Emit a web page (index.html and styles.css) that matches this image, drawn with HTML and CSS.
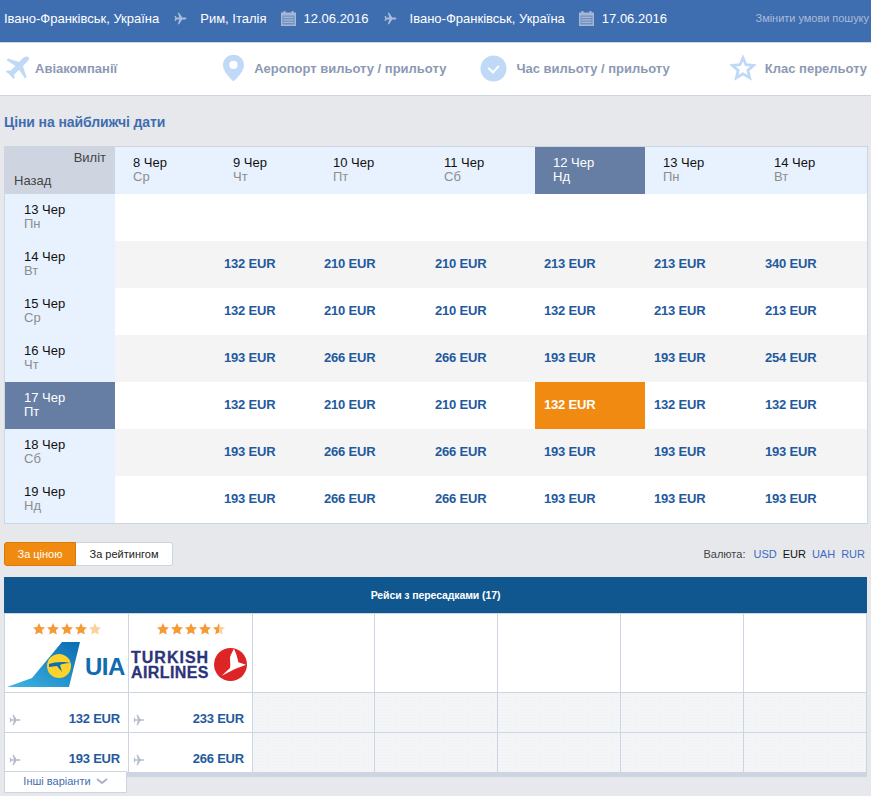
FILE: index.html
```html
<!DOCTYPE html>
<html>
<head>
  <title>Ціни на найближчі дати</title>
  <meta name="viewport" content="width=device-width, initial-scale=1">
  <link rel="stylesheet" href="styles.css">
</head>
<body>
  <svg class="defs" width="0" height="0">
    <defs>
      <symbol id="plane" viewBox="0 0 24 24">
        <path d="M23 12c0-1-1.200-1.700-2.600-1.700h-5.200L9.400 1.500H7l2.900 8.800H5L3 7.600H1l1.200 4.400L1 16.400h2l2-2.700h4.900L7 22.500h2.400l5.800-8.800h5.200C21.800 13.700 23 13 23 12z"/>
      </symbol>
      <symbol id="calendar" viewBox="0 0 15 15">
        <path d="M2.500 0h2v1.500h6V0h2v1.500H15V15H0V1.500h2.500z" fill="#a4b8d6"/>
        <path d="M1.500 4.500h12v9h-12z" fill="#6f90bf"/>
        <path d="M2.500 5.800h10V7h-10zM2.500 8.300h10v1.200h-10zM2.500 10.800h10V12h-10z" fill="#a4b8d6"/>
      </symbol>
      <symbol id="star" viewBox="0 0 14 14">
        <path d="M7 1l1.800 3.900 4.200.5-3.100 2.900.9 4.200L7 10.400l-3.800 2.100.9-4.200L1 5.400l4.200-.5z"/>
      </symbol>
      <linearGradient id="half-star">
        <stop offset="0.5" stop-color="#f59a36"/>
        <stop offset="0.5" stop-color="#fbd1a0"/>
      </linearGradient>
      <linearGradient id="tail" x1="0" y1="1" x2="1" y2="0">
        <stop offset="0" stop-color="#3fb6e6"/>
        <stop offset="1" stop-color="#0a6cb0"/>
      </linearGradient>
    </defs>
  </svg>

  <div class="search-bar">
    <span>Івано-Франківськ, Україна</span>
    <svg class="bar-plane"><use href="#plane"/></svg>
    <span>Рим, Італія</span>
    <svg class="bar-cal"><use href="#calendar"/></svg>
    <span>12.06.2016</span>
    <svg class="bar-plane"><use href="#plane"/></svg>
    <span>Івано-Франківськ, Україна</span>
    <svg class="bar-cal"><use href="#calendar"/></svg>
    <span>17.06.2016</span>
    <a class="change-search">Змінити умови пошуку</a>
  </div>

  <div class="filters">
    <div class="filter">
      <svg class="filter-icon plane-icon" viewBox="0 0 24 24"><path d="M23.500 1C22 -.2 19.500.6 18 2.100l-4 4L3 2.500 1.500 4l8.800 5.900-4.800 4.900-3-.6L1 15.700l4 3.300 3.300 4 1.500-1.500-.6-3 4.900-4.800L20 22.500l1.500-1.500-3.600-11 4-4c1.500-1.500 2.800-3.800 1.600-5z"/></svg>
      <span>Авіакомпанії</span>
    </div>
    <div class="filter filter-airport">
      <svg class="filter-icon pin-icon" viewBox="0 0 22 28"><path fill-rule="evenodd" d="M11 0c6 0 11 4.800 11 10.800C22 17.500 15 24 11 28 7 24 0 17.500 0 10.800 0 4.800 5 0 11 0zm0 6.500a4.300 4.300 0 1 0 0 8.600 4.300 4.300 0 0 0 0-8.600z"/></svg>
      <span>Аеропорт вильоту / прильоту</span>
    </div>
    <div class="filter filter-time">
      <svg class="filter-icon check-icon" viewBox="0 0 28 28"><circle cx="14" cy="14" r="13.500"/><path d="M8.500 13.500l5 4.500 6-6.500" fill="none" stroke="#fff" stroke-width="2.200"/></svg>
      <span>Час вильоту / прильоту</span>
    </div>
    <div class="filter filter-class">
      <svg class="filter-icon star-icon" viewBox="0 0 28 28"><path d="M14 3l3.200 7.500 8.300.7-6.300 5.300 2 8L14 20.200 6.800 24.500l2-8L2.500 11.200l8.300-.7z" fill="#fff" stroke="#bfd9f6" stroke-width="3"/></svg>
      <span>Клас перельоту</span>
    </div>
  </div>

  <h2 class="section-title">Ціни на найближчі дати</h2>

  <table class="prices">
    <colgroup>
      <col class="col-first"><col class="col-a"><col class="col-a"><col class="col-b"><col class="col-c"><col class="col-d"><col class="col-b"><col class="col-b">
    </colgroup>
    <tr>
      <th class="corner"><div class="corner-out">Виліт</div><div class="corner-back">Назад</div></th>
      <th class="date"><b>8 Чер</b><i>Ср</i></th>
      <th class="date"><b>9 Чер</b><i>Чт</i></th>
      <th class="date"><b>10 Чер</b><i>Пт</i></th>
      <th class="date"><b>11 Чер</b><i>Сб</i></th>
      <th class="date selected"><b>12 Чер</b><i>Нд</i></th>
      <th class="date"><b>13 Чер</b><i>Пн</i></th>
      <th class="date"><b>14 Чер</b><i>Вт</i></th>
    </tr>
    <tr>
      <th class="back"><b>13 Чер</b><i>Пн</i></th>
      <td></td><td></td><td></td><td></td><td></td><td></td><td></td>
    </tr>
    <tr>
      <th class="back"><b>14 Чер</b><i>Вт</i></th>
      <td></td><td>132 EUR</td><td>210 EUR</td><td>210 EUR</td><td>213 EUR</td><td>213 EUR</td><td>340 EUR</td>
    </tr>
    <tr>
      <th class="back"><b>15 Чер</b><i>Ср</i></th>
      <td></td><td>132 EUR</td><td>210 EUR</td><td>210 EUR</td><td>132 EUR</td><td>213 EUR</td><td>213 EUR</td>
    </tr>
    <tr>
      <th class="back"><b>16 Чер</b><i>Чт</i></th>
      <td></td><td>193 EUR</td><td>266 EUR</td><td>266 EUR</td><td>193 EUR</td><td>193 EUR</td><td>254 EUR</td>
    </tr>
    <tr>
      <th class="back selected"><b>17 Чер</b><i>Пт</i></th>
      <td></td><td>132 EUR</td><td>210 EUR</td><td>210 EUR</td><td class="best">132 EUR</td><td>132 EUR</td><td>132 EUR</td>
    </tr>
    <tr>
      <th class="back"><b>18 Чер</b><i>Сб</i></th>
      <td></td><td>193 EUR</td><td>266 EUR</td><td>266 EUR</td><td>193 EUR</td><td>193 EUR</td><td>193 EUR</td>
    </tr>
    <tr>
      <th class="back"><b>19 Чер</b><i>Нд</i></th>
      <td></td><td>193 EUR</td><td>266 EUR</td><td>266 EUR</td><td>193 EUR</td><td>193 EUR</td><td>193 EUR</td>
    </tr>
  </table>

  <div class="sort-row">
    <div class="sort-tabs">
      <button class="sort-tab active">За ціною</button>
      <button class="sort-tab">За рейтингом</button>
    </div>
    <div class="currency">
      <span class="currency-label">Валюта:</span>
      <a>USD</a>
      <a class="current">EUR</a>
      <a>UAH</a>
      <a>RUR</a>
    </div>
  </div>

  <div class="results-head">Рейси з пересадками (17)</div>

  <div class="results">
    <div class="airline">
      <div class="stars">
        <svg><use href="#star"/></svg><svg><use href="#star"/></svg><svg><use href="#star"/></svg><svg><use href="#star"/></svg><svg class="faded"><use href="#star"/></svg>
      </div>
      <div class="logo logo-uia">
        <svg class="uia-tail" viewBox="0 0 74 46">
          <path d="M0 46l25-9L55 1h18l-11 45z" fill="url(#tail)"/>
          <circle cx="52" cy="25" r="12" fill="#fcd22c"/>
          <path d="M42 23c5-2 15-3 21-1-5 0-8 1-10 2l2 7-5-6-8 1z" fill="#0b6fb0"/>
        </svg>
        <span class="uia-name">UIA</span>
      </div>
    </div>
    <div class="airline">
      <div class="stars">
        <svg><use href="#star"/></svg><svg><use href="#star"/></svg><svg><use href="#star"/></svg><svg><use href="#star"/></svg><svg class="half"><use href="#star"/></svg>
      </div>
      <div class="logo logo-turkish">
        <div class="turkish-name">
          <div class="turkish-top">TURKISH</div>
          <div class="turkish-bottom">AIRLINES</div>
        </div>
        <svg class="turkish-mark" viewBox="0 0 33 33">
          <circle cx="16.500" cy="16.500" r="16.500" fill="#dd2526"/>
          <path d="M20 .7c2 4 3.500 9 4.300 13.600l7.700 2.400L21 21 7.700 27.700 16 20c.8-4-.2-7.500 0-10.700 1-3 2.500-6 4-8.600z" fill="#fff"/>
        </svg>
      </div>
    </div>
    <div class="blank"></div><div class="blank"></div><div class="blank"></div><div class="blank"></div><div class="blank"></div>

    <div class="fare"><svg><use href="#plane"/></svg><span>132 EUR</span></div>
    <div class="fare"><svg><use href="#plane"/></svg><span>233 EUR</span></div>
    <div class="blank shaded"></div><div class="blank shaded"></div><div class="blank shaded"></div><div class="blank shaded"></div><div class="blank shaded"></div>

    <div class="fare"><svg><use href="#plane"/></svg><span>193 EUR</span></div>
    <div class="fare"><svg><use href="#plane"/></svg><span>266 EUR</span></div>
    <div class="blank shaded"></div><div class="blank shaded"></div><div class="blank shaded"></div><div class="blank shaded"></div><div class="blank shaded"></div>
  </div>
  <div class="results-foot"></div>
  <a class="more">Інші варіанти <svg viewBox="0 0 12 7"><path d="M1 1l5 4 5-4" fill="none" stroke="#a8b2c4" stroke-width="2"/></svg></a>
</body>
</html>
```

FILE: styles.css
```css
body {
  font-family: "Liberation Sans", Arial, sans-serif;
  background-color: #e7e8ec;
  margin: 0;
  padding: 0;
  height: 796px;
  overflow: hidden;
  font-size: 13px;
}
.defs {
  display: block;
  height: 0;
}
.search-bar {
  display: flex;
  align-items: center;
  height: 36px;
  padding: 0 4px 6px;
  background-color: #3f6eb0;
  color: #fff;
  font-size: 13px;
  border-bottom: 1px solid #ccd5e3;
  white-space: nowrap;
}
.search-bar svg {
  flex: none;
}
.bar-plane {
  width: 13px;
  height: 13px;
  fill: #a9bcd9;
  margin: 0 13px 0 15px;
}
.bar-cal {
  width: 15px;
  height: 15px;
  margin: 0 8px 0 14px;
}
.change-search {
  margin-left: auto;
  margin-right: -2px;
  font-size: 11px;
  letter-spacing: -0.03px;
  color: #a9bcd9;
}
.filters {
  display: flex;
  align-items: center;
  height: 53px;
  padding: 0 0 2px 5px;
  box-sizing: border-box;
  background-color: #fff;
  border-bottom: 1px solid #ccd5e3;
  color: #8c99b3;
  font-size: 13px;
  font-weight: bold;
  white-space: nowrap;
}
.filter {
  display: flex;
  align-items: center;
}
.filter-airport {
  margin-left: 106px;
}
.filter-time {
  margin-left: 34px;
}
.filter-class {
  margin-left: 60px;
}
.filter-icon {
  flex: none;
  fill: #bfd9f6;
}
.plane-icon {
  width: 24px;
  height: 24px;
  margin-right: 6px;
}
.pin-icon {
  width: 21px;
  height: 28px;
  margin-right: 10px;
}
.check-icon {
  width: 27px;
  height: 27px;
  margin-right: 9px;
}
.star-icon {
  width: 26px;
  height: 28px;
  margin-right: 9px;
}
.section-title {
  margin: 18px 0 16px 4px;
  font-size: 14px;
  line-height: 16px;
  letter-spacing: -0.1px;
  color: #3f6eb0;
}
.prices {
  width: 864px;
  margin-left: 4px;
  border-collapse: separate;
  border-spacing: 0;
  table-layout: fixed;
  background-color: #fff;
  border: 1px solid #ccd5e3;
}
.col-first { width: 110px; }
.col-a { width: 100px; }
.col-b { width: 111px; }
.col-c { width: 109px; }
.col-d { width: 110px; }
.prices tr {
  height: 47px;
}
.prices tr:nth-child(odd) td {
  background-color: #f4f4f4;
}
.prices td {
  padding: 0 0 3px 9px;
  font-weight: bold;
  font-size: 13px;
  letter-spacing: -0.2px;
  color: #1f5a9e;
}
.prices td.best {
  background-color: #f08a10;
  color: #fff;
}
.prices th {
  font-weight: normal;
  text-align: left;
  padding: 0;
  vertical-align: middle;
}
.prices b,
.prices i {
  display: block;
  font-weight: normal;
  font-style: normal;
  line-height: 14px;
}
.prices b {
  color: #111;
}
.prices i {
  color: #8d8d8d;
}
.prices .date {
  background-color: #e8f1fe;
  padding: 0 0 2px 18px;
}
.prices .back {
  background-color: #e8f1fe;
  padding: 0 0 2px 19px;
}
.prices th.selected {
  background-color: #667ea3;
}
.prices th.selected b,
.prices th.selected i {
  color: #fff;
}
.prices .corner {
  background-color: #cfd5e0;
  color: #444;
  padding: 0 9px 2px 9px;
}
.corner-out {
  text-align: right;
  line-height: 14px;
  margin-bottom: 9px;
}
.corner-back {
  line-height: 14px;
}
.sort-row {
  display: flex;
  justify-content: space-between;
  align-items: center;
  margin: 17px 6px 0 4px;
  height: 25px;
}
.sort-tabs {
  display: flex;
}
.sort-tab {
  width: 97px;
  height: 24px;
  padding: 0;
  font-family: inherit;
  font-size: 11px;
  color: #222;
  background-color: #fff;
  border: 1px solid #ccd5e3;
  border-left: none;
  border-radius: 0 3px 3px 0;
  cursor: pointer;
}
.sort-tab.active {
  width: 72px;
  color: #fff;
  background-color: #f08a10;
  border: 1px solid #d67a0c;
  border-radius: 3px 0 0 3px;
}
.currency {
  display: flex;
  gap: 6px;
  font-size: 11px;
  color: #3f6ac0;
}
.currency-label {
  color: #444;
  margin-right: 2px;
}
.currency .current {
  color: #111;
}
.results-head {
  height: 36px;
  line-height: 36px;
  margin: 11px 4px 0;
  background-color: #10568f;
  color: #fff;
  font-size: 10.5px;
  letter-spacing: -0.1px;
  font-weight: bold;
  text-align: center;
}
.results {
  display: grid;
  grid-template-columns: 124px 124px 122px 123px 123px 123px 123px;
  grid-template-rows: 79px 40px 40px;
  margin: 0 4px;
  background-color: #fff;
  border-left: 1px solid #ccd5e3;
}
.results > div {
  box-sizing: border-box;
  border-right: 1px solid #ccd5e3;
  border-top: 1px solid #ccd5e3;
}
.results .blank.shaded {
  background-color: #f4f5f7;
  background-image: radial-gradient(#eceef2 0.6px, transparent 0.7px);
  background-size: 3px 3px;
}
.stars {
  display: flex;
  justify-content: center;
  height: 14px;
  margin-top: 8px;
}
.stars svg {
  width: 14px;
  height: 14px;
  fill: #f59a36;
}
.stars .faded {
  fill: #fbd1a0;
}
.stars .half {
  fill: url(#half-star);
}
.logo {
  display: flex;
  align-items: center;
}
.logo-uia {
  margin-top: 5px;
}
.uia-tail {
  width: 74px;
  height: 46px;
  margin-left: 2px;
  flex: none;
}
.uia-name {
  margin: 6px 0 0 4px;
  font-size: 24px;
  font-weight: bold;
  color: #0f6cb0;
  letter-spacing: -0.5px;
}
.logo-turkish {
  margin-top: 12px;
}
.turkish-name {
  margin-left: 2px;
  font-size: 16px;
  line-height: 15px;
  font-weight: bold;
  color: #2c3479;
  -webkit-text-stroke: 0.3px #2c3479;
}
.turkish-top {
  letter-spacing: 1px;
}
.turkish-bottom {
  letter-spacing: 0.4px;
}
.turkish-mark {
  width: 33px;
  height: 33px;
  margin-left: 5px;
  flex: none;
}
.fare {
  display: flex;
  align-items: flex-end;
  justify-content: space-between;
  padding: 0 8px 6px 4px;
  font-size: 13px;
  letter-spacing: -0.2px;
  font-weight: bold;
  color: #1f5a9e;
}
.fare svg {
  width: 12px;
  height: 12px;
  fill: #b4bdcb;
}
.results-foot {
  height: 5px;
  margin: 0 4px;
  background-color: #cdd5e3;
}
.more {
  display: block;
  box-sizing: border-box;
  width: 123px;
  height: 22px;
  margin: -6px 0 0 4px;
  position: relative;
  line-height: 19px;
  text-align: center;
  font-size: 11px;
  color: #3f6eb0;
  background-color: #fff;
  border: 1px solid #ccd5e3;
}
.more svg {
  width: 12px;
  height: 7px;
  margin-left: 2px;
}
```
